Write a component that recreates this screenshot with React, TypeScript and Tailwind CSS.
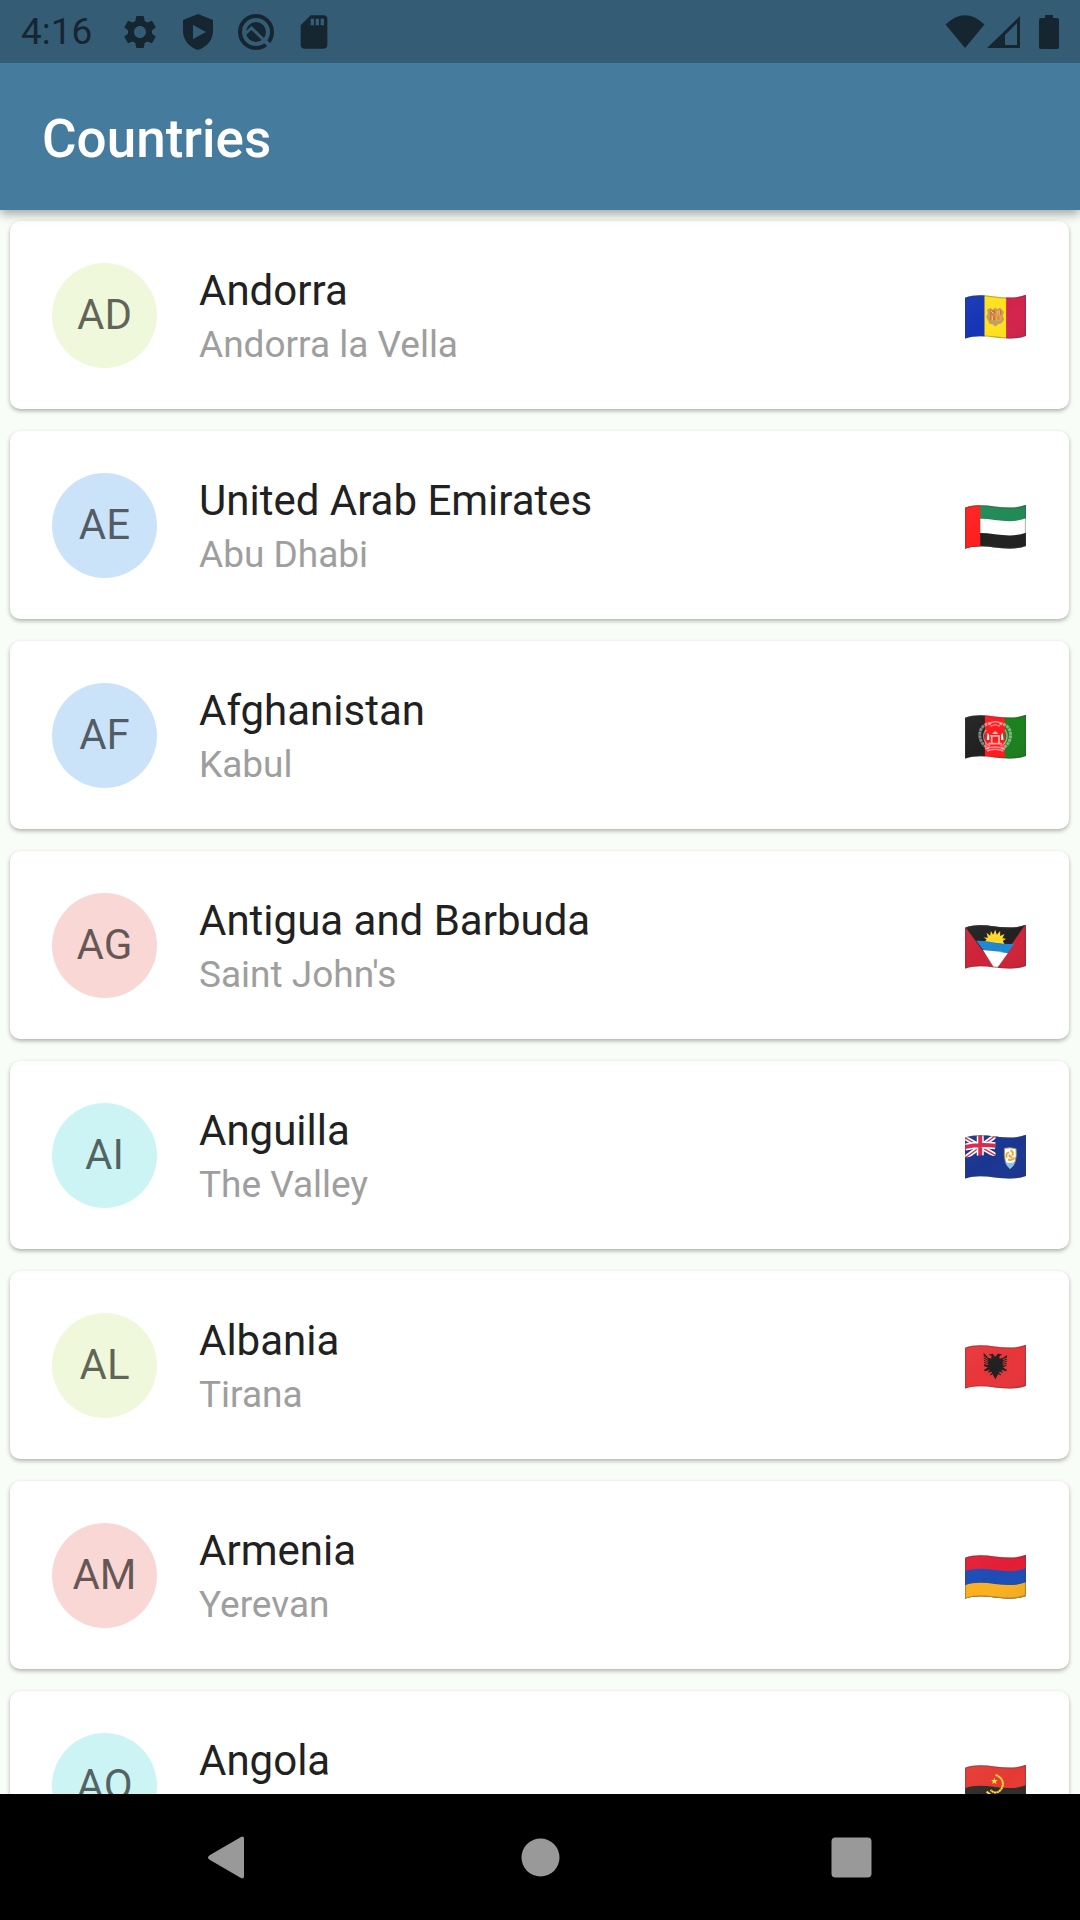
import { useId, type ReactNode } from "react";
import { MdSdCard, MdSettings } from "react-icons/md";

type Country = { code: string; name: string; capital: string; tint: string; flag: ReactNode };

const FLAG = "M0 9C60 -14 120 24 184 0V124C120 148 60 110 0 133Z";

/** One waving horizontal stripe running from its top edge down past the flag. */
function Stripe({ y, fill }: { y: number; fill: string }) {
  return <path transform={`translate(0 ${y})`} d="M0 9C60 -14 120 24 184 0V150H0Z" fill={fill} />;
}

function Flag({ label, children }: { label: string; children: ReactNode }) {
  const id = useId();
  return (
    <svg viewBox="0 -11 184 147" role="img" aria-label={label} className="h-[49px] w-[61px] shrink-0">
      <defs>
        <clipPath id={`${id}c`}>
          <path d={FLAG} />
        </clipPath>
        <linearGradient id={`${id}g`} x1="0" y1="0" x2="1" y2="1">
          <stop offset="0" stopColor="#fff" stopOpacity=".04" />
          <stop offset=".5" stopColor="#fff" stopOpacity="0" />
          <stop offset="1" stopColor="#000" stopOpacity=".05" />
        </linearGradient>
      </defs>
      <g clipPath={`url(#${id}c)`}>
        {children}
        <path d={FLAG} fill={`url(#${id}g)`} />
        <path d={FLAG} fill="none" stroke="#424242" strokeOpacity=".35" strokeWidth="7" />
      </g>
    </svg>
  );
}

const andorra = (
  <>
    <path d="M0-10H60V140H0Z" fill="#1535b5" />
    <path d="M59-10H125V140H59Z" fill="#ffe11f" />
    <path d="M124-10H184V140H124Z" fill="#d3234d" />
    <path
      d="M67 44L78 40L84 46L90 38L98 43L106 39L112 46L118 52L114 62L118 75L110 86L100 89L92 96L84 90L73 87L69 76L64 66L69 57Z"
      fill="#c0a063"
    />
    <path d="M75 46H91V60H75ZM94 46H109V60H94ZM75 63H90V77H75Z" fill="#d9702f" />
    <path d="M78 49L87 57M97 47V60M103 47V60M82 64V77" stroke="#ffd9a0" strokeWidth="3" />
    <path d="M94 63H108V77H94Z" fill="#f7cf2a" />
    <path d="M95 67H107M95 73H107" stroke="#e0562f" strokeWidth="3" />
  </>
);

const emirates = (
  <>
    <Stripe y={-10} fill="#218a55" />
    <Stripe y={41} fill="#ffffff" />
    <Stripe y={84} fill="#212121" />
    <path d="M0-10H46V140H0Z" fill="#ff1f1f" />
  </>
);

const afghanistan = (
  <>
    <path d="M0-10H61V140H0Z" fill="#212121" />
    <path d="M60-10H121V140H60Z" fill="#ff1a1f" />
    <path d="M120-10H184V140H120Z" fill="#1b801e" />
    <g fill="none" stroke="#fff">
      <path
        d="M78 26C35 27 34 86 72 101M104 26C149 28 146 89 110 102"
        strokeWidth="9"
        strokeOpacity=".45"
        strokeDasharray="9 2"
      />
      <path d="M64 45C50 60 56 88 76 94M120 45C133 61 126 88 107 94" strokeWidth="4" strokeOpacity=".5" />
      <path d="M72 28Q91 14 111 28M77 35Q91 26 105 35" strokeWidth="4" strokeOpacity=".5" />
      <path d="M61 103Q91 91 121 104M66 109Q91 99 116 109" strokeWidth="5" strokeOpacity=".5" />
    </g>
    <path
      d="M71 84H111V90H71ZM77 61H105V66H77ZM78 66H83V84H78ZM100 66H105V84H100ZM82 58Q91 41 100 58Z"
      fill="#ffb3aa"
    />
    <path d="M68 54L73 60V76H66ZM114 54L109 60V76H116Z" fill="#fff" />
  </>
);

const antigua = (
  <>
    <path d="M0-10H184V140H0Z" fill="#cf2338" />
    <path d="M0 5L92 130L184-4V-10H0Z" fill="#212121" />
    <path
      d="M58 54L65 44L56 38L69 39L65 24L76 33L78 19L85 30L91 15L96 30L106 19L106 34L119 28L113 41L124 42L114 49L119 58Z"
      fill="#ffd92b"
    />
    <path d="M34 48Q60 47 92 54Q125 60 149 57L128 86Q92 81 54 75Z" fill="#1e88d2" />
    <path d="M54 76Q92 78 129 86L97 130H88Z" fill="#fff" />
  </>
);

const anguilla = (
  <>
    <path d="M0-10H184V140H0Z" fill="#1a3691" />
    <path d="M0 9L92 62M0 70L92 3" stroke="#fff" strokeWidth="14" />
    <path d="M0 9L92 62M0 70L92 3" stroke="#d9284b" strokeWidth="4" />
    <path d="M0 37Q40 27 92 33M46-5V64" stroke="#fff" strokeWidth="21" fill="none" />
    <path d="M0 37Q40 27 92 33M46-5V64" stroke="#d9284b" strokeWidth="12" fill="none" />
    <path d="M92 0H110V70H92ZM0 69Q45 58 92 64V90H0Z" fill="#1a3691" />
    <path d="M119 41Q136 37 154 42Q159 85 136 103Q115 86 119 41Z" fill="#fff" stroke="#8b9464" strokeWidth="3" />
    <path d="M121 83Q136 88 151 82Q147 95 136 101Q125 94 121 83Z" fill="#85c4f5" />
    <path
      d="M137 46Q149 53 142 63M126 69Q121 57 133 53M130 74Q142 80 150 69M132 61L142 70"
      stroke="#f7a52b"
      strokeWidth="6"
      fill="none"
    />
  </>
);

const albania = (
  <>
    <path d="M0-10H184V140H0Z" fill="#e8353a" />
    <path
      d="M91 36L83 26L71 30L80 34L79 42L69 38L56 23L58 65L69 68L57 76L60 80L75 75L68 84L80 81L86 94L92 104L97 94L104 81L115 85L109 75L124 80L127 76L114 68L125 64L127 31L115 39L104 42L104 34L113 30L100 26Z"
      fill="#212121"
    />
    <path
      d="M55 35L69 44M55 42L69 50M56 49L69 55M57 56L70 60M128 39L114 45M127 46L114 51M127 53L114 56M127 60L114 61"
      stroke="#e8353a"
      strokeWidth="3"
    />
    <path d="M84 85L76 91M100 85L108 91" stroke="#212121" strokeWidth="4" />
  </>
);

const armenia = (
  <>
    <Stripe y={-10} fill="#e31d36" />
    <Stripe y={41} fill="#1c4cb5" />
    <Stripe y={83} fill="#fbb01f" />
  </>
);

const angola = (
  <>
    <Stripe y={-10} fill="#e53a33" />
    <Stripe y={62} fill="#302c2a" />
    <path
      d="M92 31C118 38 121 67 102 81C92 86 83 83 77 76"
      fill="none"
      stroke="#ffe02f"
      strokeWidth="6"
      strokeDasharray="7 1"
    />
    <path d="M65 81L96 104" stroke="#ffe02f" strokeWidth="6" />
    <path d="M89 39L91 46L98 46L93 51L95 58L88 54L82 58L84 51L79 46H86Z" fill="#ffe02f" />
  </>
);

const countries: Country[] = [
  { code: "AD", name: "Andorra", capital: "Andorra la Vella", tint: "bg-[#eff8da]", flag: andorra },
  { code: "AE", name: "United Arab Emirates", capital: "Abu Dhabi", tint: "bg-[#cbe3f9]", flag: emirates },
  { code: "AF", name: "Afghanistan", capital: "Kabul", tint: "bg-[#cbe3f9]", flag: afghanistan },
  { code: "AG", name: "Antigua and Barbuda", capital: "Saint John's", tint: "bg-[#f9d7d5]", flag: antigua },
  { code: "AI", name: "Anguilla", capital: "The Valley", tint: "bg-[#cdf4f5]", flag: anguilla },
  { code: "AL", name: "Albania", capital: "Tirana", tint: "bg-[#eff8da]", flag: albania },
  { code: "AM", name: "Armenia", capital: "Yerevan", tint: "bg-[#f9d7d5]", flag: armenia },
  { code: "AO", name: "Angola", capital: "Luanda", tint: "bg-[#cdf4f5]", flag: angola },
];

function StatusBar() {
  return (
    <div className="relative z-20 flex h-[63px] shrink-0 items-center justify-between bg-[#355c75] pr-5 pl-[21px] text-[#162630]">
      <div className="flex items-center">
        <time className="text-[37px] leading-[63px]">4:16</time>
        <div className="ml-7 flex items-center gap-[18px]">
          <MdSettings className="size-10" />
          <svg viewBox="0 0 40 40" className="size-10" fill="currentColor" fillRule="evenodd" aria-hidden="true">
            <path d="M20 2L35 8V19C35 28 29 35 20 38C11 35 5 28 5 19V8ZM15 13V27L28 20Z" />
          </svg>
          <svg viewBox="0 0 40 40" className="size-10" fill="none" aria-hidden="true">
            <circle cx="20" cy="20" r="16" stroke="currentColor" strokeWidth="4" />
            <circle cx="20" cy="20" r="10" fill="currentColor" />
            <path d="M9 22L15.500 16L36 36" stroke="#355c75" strokeWidth="3" />
            <path d="M28 28L34 34" stroke="#355c75" strokeWidth="4" />
          </svg>
          <MdSdCard className="size-10" />
        </div>
      </div>
      <div className="flex items-center">
        <svg viewBox="0 0 40 34" className="h-[34px] w-10" fill="currentColor" aria-hidden="true">
          <path d="M.5 9.500Q20-9 39.500 9.500L20 33Z" />
        </svg>
        <svg
          viewBox="0 0 34 34"
          className="ml-0.5 h-[34px] w-[34px]"
          fill="currentColor"
          fillRule="evenodd"
          aria-hidden="true"
        >
          <path d="M33 1V33H0ZM30 8L18 20V30H30Z" />
        </svg>
        <svg viewBox="0 0 22 34" className="ml-[17px] h-[34px] w-[22px]" fill="currentColor" aria-hidden="true">
          <path d="M7 0H15V3H19Q21 3 21 5V32Q21 34 19 34H3Q1 34 1 32V5Q1 3 3 3H7Z" />
        </svg>
      </div>
    </div>
  );
}

function CountryCard({ code, name, capital, tint, flag }: Country) {
  return (
    <li className="flex items-center rounded-[10px] bg-white py-10 pr-[43px] pl-[42px] shadow-[0_2px_4px_rgba(0,0,0,0.3)]">
      <div
        className={`flex size-[105px] shrink-0 items-center justify-center rounded-full text-[42px] leading-[58px] text-black/60 ${tint}`}
      >
        {code}
      </div>
      <div className="ml-[42px] min-w-0 flex-1">
        <h2 className="truncate text-[42px] leading-[60px] text-[#212121]">{name}</h2>
        <p className="truncate text-[37px] leading-[48px] text-[#9e9e9e]">{capital}</p>
      </div>
      <Flag label={`Flag of ${name}`}>{flag}</Flag>
    </li>
  );
}

export default function App() {
  return (
    <div className="flex h-screen flex-col bg-[#f8fdf7] font-['Roboto',sans-serif]">
      <StatusBar />
      <header className="relative z-10 flex h-[147px] shrink-0 items-center bg-[#457b9d] px-[42px] pt-1 shadow-[0_4px_10px_rgba(0,0,0,0.35)]">
        <h1 className="text-[53px] leading-[62px] font-medium text-white">Countries</h1>
      </header>
      <main className="min-h-0 flex-1 overflow-y-auto [scrollbar-width:none]">
        <ul className="flex flex-col gap-[22px] py-[11px] pr-[11px] pl-[10px]">
          {countries.map((country) => (
            <CountryCard key={country.code} {...country} />
          ))}
        </ul>
      </main>
      <nav className="relative z-10 flex h-[126px] shrink-0 items-center justify-center bg-black text-[#999999]">
        <button aria-label="Back" className="flex w-[311px] justify-center">
          <svg viewBox="0 0 63 63" className="size-[63px]" fill="currentColor" aria-hidden="true">
            <path d="M43 11Q46 9.500 46 13V50Q46 53.500 43 52L12 34Q8 31.500 12 29Z" />
          </svg>
        </button>
        <button aria-label="Home" className="flex w-[311px] justify-center">
          <svg viewBox="0 0 63 63" className="size-[63px]" fill="currentColor" aria-hidden="true">
            <circle cx="31.500" cy="31.500" r="19" />
          </svg>
        </button>
        <button aria-label="Recent apps" className="flex w-[311px] justify-center">
          <svg viewBox="0 0 63 63" className="size-[63px]" fill="currentColor" aria-hidden="true">
            <rect x="11.500" y="11.500" width="40" height="40" rx="4" />
          </svg>
        </button>
      </nav>
    </div>
  );
}
